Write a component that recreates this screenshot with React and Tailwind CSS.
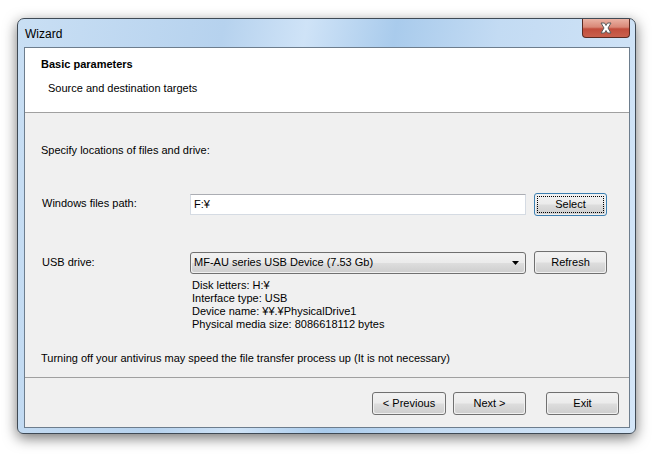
import React from "react";

const font = { fontFamily: '"Liberation Sans", Arial, sans-serif' };

const Btn = ({ children, focused, className = "" }) => (
  <div
    className={`h-[23px] rounded-[3px] border flex items-center justify-center text-[11px] text-black p-px ${
      focused ? "border-[#3c7fb1]" : "border-[#707070]"
    } ${className}`}
  >
    <div
      className={`w-full h-full rounded-[2px] flex items-center justify-center bg-[linear-gradient(to_bottom,#f2f2f2_0%,#ebebeb_48%,#dddddd_52%,#cfcfcf_100%)] ${
        focused ? "outline outline-1 outline-dotted outline-black -outline-offset-2" : ""
      }`}
    >
      {children}
    </div>
  </div>
);

const CloseButton = () => (
  <div className="w-[48px] h-[19px] rounded-b-[4px] border border-t-0 border-[#5a2a22] bg-[linear-gradient(to_bottom,#eab2a4_0%,#d98877_45%,#c14d3c_55%,#c9604d_100%)] flex items-center justify-center">
    <svg width="14" height="12" viewBox="0 0 14 12">
      <path
        d="M2 1 L5.5 1 L7 3.5 L8.5 1 L12 1 L9 6 L12 11 L8.5 11 L7 8.5 L5.5 11 L2 11 L5 6 Z"
        fill="#ffffff"
        stroke="#5b5b5b"
        strokeWidth="1"
        strokeLinejoin="round"
      />
    </svg>
  </div>
);

export default function App() {
  return (
    <div className="w-[657px] h-[457px] bg-white pt-[18px] pl-[17px]" style={font}>
      <div className="w-[619px] h-[416px] rounded-t-[7px] rounded-b-[6px] border border-[#3f4a55] bg-[linear-gradient(100deg,#c9dff4_0%,#b6d2ee_30%,#cfe3f7_42%,#a9cbec_55%,#c3dbf3_70%,#d4e6f8_100%)] shadow-[0_4px_14px_rgba(0,0,0,0.55)] flex flex-col">
        {/* Title bar */}
        <div className="h-[28px] flex items-start justify-between pl-[7px] pr-[5px]">
          <div className="text-[12px] text-black mt-[6px]">Wizard</div>
          <CloseButton />
        </div>

        {/* Client area */}
        <div className="mx-[6px] w-[606px] h-[381px] border border-[#6d7d8d] bg-[#f0f0f0] flex flex-col text-[11px] text-black">
          {/* Header */}
          <div className="h-[65px] bg-white border-b border-[#a0a0a0] pl-[16px] pt-[9px]">
            <div className="font-bold leading-[14px]">Basic parameters</div>
            <div className="pl-[7px] mt-[10px] leading-[14px]">Source and destination targets</div>
          </div>

          {/* Body */}
          <div className="flex-1 flex flex-col pl-[16px]">
            <div className="mt-[30px] leading-[14px]">Specify locations of files and drive:</div>

            <div className="flex items-center mt-[36px]">
              <div className="w-[149px] pl-px leading-[14px] -mt-[3px]">Windows files path:</div>
              <div className="w-[336px] h-[21px] bg-white border border-[#d5dbe3] border-t-[#abadb3] flex items-center pl-[3px]">
                F:¥
              </div>
              <Btn focused className="w-[73px] ml-[8px]">
                Select
              </Btn>
            </div>

            <div className="flex items-center mt-[35px]">
              <div className="w-[149px] pl-px leading-[14px] -mt-[2px]">USB drive:</div>
              <div className="w-[336px] h-[22px] rounded-[3px] border border-[#707070] p-px">
                <div className="w-full h-full rounded-[2px] flex items-center justify-between pl-[2px] pr-[5px] bg-[linear-gradient(to_bottom,#f2f2f2_0%,#ebebeb_48%,#dddddd_52%,#cfcfcf_100%)]">
                  <span>MF-AU series USB Device (7.53 Gb)</span>
                  <svg width="7" height="4" viewBox="0 0 7 4">
                    <path d="M0 0 L7 0 L3.5 4 Z" fill="#000" />
                  </svg>
                </div>
              </div>
              <Btn className="w-[73px] ml-[8px]">Refresh</Btn>
            </div>

            <div className="ml-[151px] mt-[5px] leading-[13px]">
              <div>Disk letters: H:¥</div>
              <div>Interface type: USB</div>
              <div>Device name: ¥¥.¥PhysicalDrive1</div>
              <div>Physical media size: 8086618112 bytes</div>
            </div>

            <div className="mt-[20px] leading-[14px]">
              Turning off your antivirus may speed the file transfer process up (It is not necessary)
            </div>
          </div>

          {/* Footer */}
          <div className="h-[50px] border-t border-[#a0a0a0] flex items-start pt-[14px] pl-[347px]">
            <Btn className="w-[74px]">&lt; Previous</Btn>
            <Btn className="w-[73px] ml-[7px]">Next &gt;</Btn>
            <Btn className="w-[73px] ml-[20px]">Exit</Btn>
          </div>
        </div>
      </div>
    </div>
  );
}
